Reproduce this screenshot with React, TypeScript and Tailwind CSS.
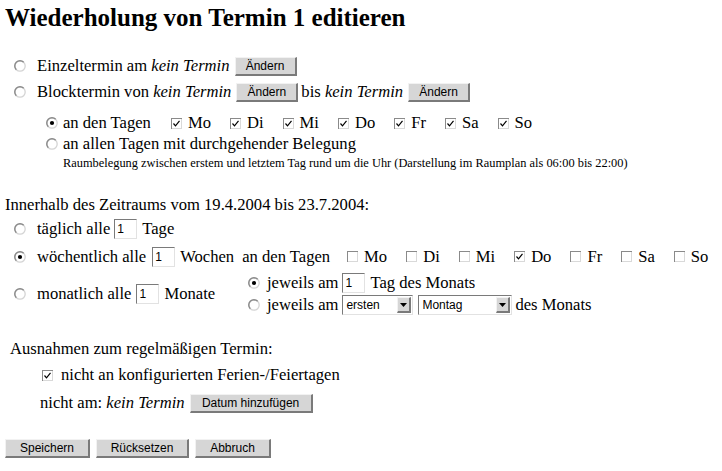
import type React from "react";

const SANS = "font-['Liberation_Sans',Arial,sans-serif]";

function Radio({ checked = false }: { checked?: boolean }) {
  return (
    <svg width="12" height="12" viewBox="0 0 12 12" className="shrink-0" aria-hidden="true">
      <circle cx="6" cy="6" r="5.2" fill="#ffffff" stroke="#d4d4d4" strokeWidth="1.3" />
      <path d="M2.3 9.7 A5.2 5.2 0 0 1 9.7 2.3" fill="none" stroke="#8a8a8a" strokeWidth="1.4" />
      {checked && <circle cx="6" cy="6" r="2.1" fill="#000000" />}
    </svg>
  );
}

function Checkbox({ checked = false }: { checked?: boolean }) {
  return (
    <svg width="11" height="11" viewBox="0 0 11 11" className="shrink-0" aria-hidden="true">
      <rect x="0" y="0" width="11" height="11" fill="#d9d9d9" />
      <path d="M0 0 H11 V1 H1 V11 H0 Z" fill="#8a8a8a" />
      <rect x="1" y="1" width="9" height="9" fill="#ffffff" />
      {checked && (
        <path d="M2.5 5.5 L4.5 7.8 L8.5 2.8" fill="none" stroke="#000000" strokeWidth="1.2" />
      )}
    </svg>
  );
}

function Btn({ className = "", children }: { className?: string; children: React.ReactNode }) {
  return (
    <button
      type="button"
      className={`flex h-[19px] shrink-0 items-center justify-center border-t border-l border-[#f2f2f2] border-r-2 border-b-2 border-r-[#7a7a7a] border-b-[#7a7a7a] bg-[#d6d6d6] text-[12px] leading-none text-black ${SANS} ${className}`}
    >
      {children}
    </button>
  );
}

function TextBox({ value }: { value: string }) {
  return (
    <span
      className={`flex h-[20px] w-[23px] shrink-0 items-center border-t border-l border-[#7a7a7a] border-r border-b border-r-[#e2e2e2] border-b-[#e2e2e2] bg-white pl-[2px] text-[12px] ${SANS}`}
    >
      {value}
    </span>
  );
}

function Select({ value, className = "" }: { value: string; className?: string }) {
  return (
    <span
      className={`flex h-[20px] shrink-0 items-center border-t border-l border-[#7a7a7a] border-r border-b border-r-[#e2e2e2] border-b-[#e2e2e2] bg-white ${className}`}
    >
      <span className={`flex-1 pl-[3px] text-[12px] ${SANS}`}>{value}</span>
      <span className="mr-[1px] flex h-[16px] w-[14px] items-center justify-center border-t border-l border-[#f2f2f2] border-r-2 border-b-2 border-r-[#7a7a7a] border-b-[#7a7a7a] bg-[#d6d6d6]">
        <svg width="7" height="4" viewBox="0 0 7 4" aria-hidden="true">
          <path d="M0 0 H7 L3.5 4 Z" fill="#000000" />
        </svg>
      </span>
    </span>
  );
}

const DAYS = ["Mo", "Di", "Mi", "Do", "Fr", "Sa", "So"];

function DayList({ checked, className = "" }: { checked: string[]; className?: string }) {
  return (
    <div className={`flex items-center gap-[19px] ${className}`}>
      {DAYS.map((d) => (
        <span key={d} className="flex items-center">
          <Checkbox checked={checked.includes(d)} />
          <span className="ml-[6px]">{d}</span>
        </span>
      ))}
    </div>
  );
}

export default function App() {
  return (
    <div className="min-h-[471px] w-[722px] bg-white pl-[5px] font-['Liberation_Serif','Times_New_Roman',serif] text-[16.6px] text-black">
      <h1 className="h-[36px] text-[25px] font-bold leading-[36px]">
        Wiederholung von Termin 1 editieren
      </h1>

      {/* Einzel- / Blocktermin */}
      <div className="mt-[17px] flex h-[26px] items-center pl-[9px]">
        <Radio />
        <span className="ml-[11px]">
          Einzeltermin am <i>kein Termin</i>
        </span>
        <Btn className="ml-[5px] w-[62px]">Ändern</Btn>
      </div>
      <div className="flex h-[26px] items-center pl-[9px]">
        <Radio />
        <span className="ml-[11px]">
          Blocktermin von <i>kein Termin</i>
        </span>
        <Btn className="ml-[5px] w-[62px]">Ändern</Btn>
        <span className="ml-[3px]">
          bis <i>kein Termin</i>
        </span>
        <Btn className="ml-[5px] w-[62px]">Ändern</Btn>
      </div>

      <div className="mt-[8px] flex h-[20px] items-center pl-[41px]">
        <Radio checked />
        <span className="ml-[5px]">an den Tagen</span>
        <DayList className="ml-[20px]" checked={DAYS} />
      </div>
      <div className="mt-[1px] flex h-[20px] items-center pl-[41px]">
        <Radio />
        <span className="ml-[5px]">an allen Tagen mit durchgehender Belegung</span>
      </div>
      <div className="mt-[1px] flex h-[16px] items-center pl-[58px] text-[12.4px]">
        Raumbelegung zwischen erstem und letztem Tag rund um die Uhr (Darstellung im Raumplan als 06:00 bis 22:00)
      </div>

      {/* Wiederholung */}
      <div className="mt-[24px] flex h-[20px] items-center">
        Innerhalb des Zeitraums vom 19.4.2004 bis 23.7.2004:
      </div>
      <div className="mt-[1px] flex h-[26px] items-center pl-[9px]">
        <Radio />
        <span className="ml-[11px]">täglich alle</span>
        <span className="ml-[4px]">
          <TextBox value="1" />
        </span>
        <span className="ml-[5px]">Tage</span>
      </div>
      <div className="mt-[2px] flex h-[26px] items-center pl-[9px]">
        <Radio checked />
        <span className="ml-[11px]">wöchentlich alle</span>
        <span className="ml-[6px]">
          <TextBox value="1" />
        </span>
        <span className="ml-[5px]">Wochen</span>
        <span className="ml-[8px]">an den Tagen</span>
        <DayList className="ml-[17px] gap-[19.6px]" checked={["Do"]} />
      </div>
      <div className="mt-[2px] flex h-[44px]">
        <div className="flex w-[243px] items-center pl-[9px]">
          <Radio />
          <span className="ml-[11px]">monatlich alle</span>
          <span className="ml-[5px]">
            <TextBox value="1" />
          </span>
          <span className="ml-[5px]">Monate</span>
        </div>
        <div className="flex flex-col">
          <div className="flex h-[22px] items-center">
            <Radio checked />
            <span className="ml-[7px]">jeweils am</span>
            <span className="ml-[4px]">
              <TextBox value="1" />
            </span>
            <span className="ml-[5px]">Tag des Monats</span>
          </div>
          <div className="flex h-[22px] items-center">
            <Radio />
            <span className="ml-[7px]">jeweils am</span>
            <Select value="ersten" className="ml-[4px] w-[71px]" />
            <Select value="Montag" className="ml-[5px] w-[94px]" />
            <span className="ml-[3px]">des Monats</span>
          </div>
        </div>
      </div>

      {/* Ausnahmen */}
      <div className="mt-[23px] flex h-[20px] items-center pl-[5px]">
        Ausnahmen zum regelmäßigen Termin:
      </div>
      <div className="mt-[4px] flex h-[24px] items-center pl-[37px]">
        <Checkbox checked />
        <span className="ml-[8px]">nicht an konfigurierten Ferien-/Feiertagen</span>
      </div>
      <div className="mt-[4px] flex h-[24px] items-center pl-[35px]">
        <span>
          nicht am: <i>kein Termin</i>
        </span>
        <Btn className="ml-[5px] w-[123px]">Datum hinzufügen</Btn>
      </div>

      <div className="mt-[23px] flex h-[20px] items-center gap-[6px]">
        <Btn className="w-[85px]">Speichern</Btn>
        <Btn className="w-[93px]">Rücksetzen</Btn>
        <Btn className="w-[76px]">Abbruch</Btn>
      </div>
    </div>
  );
}
